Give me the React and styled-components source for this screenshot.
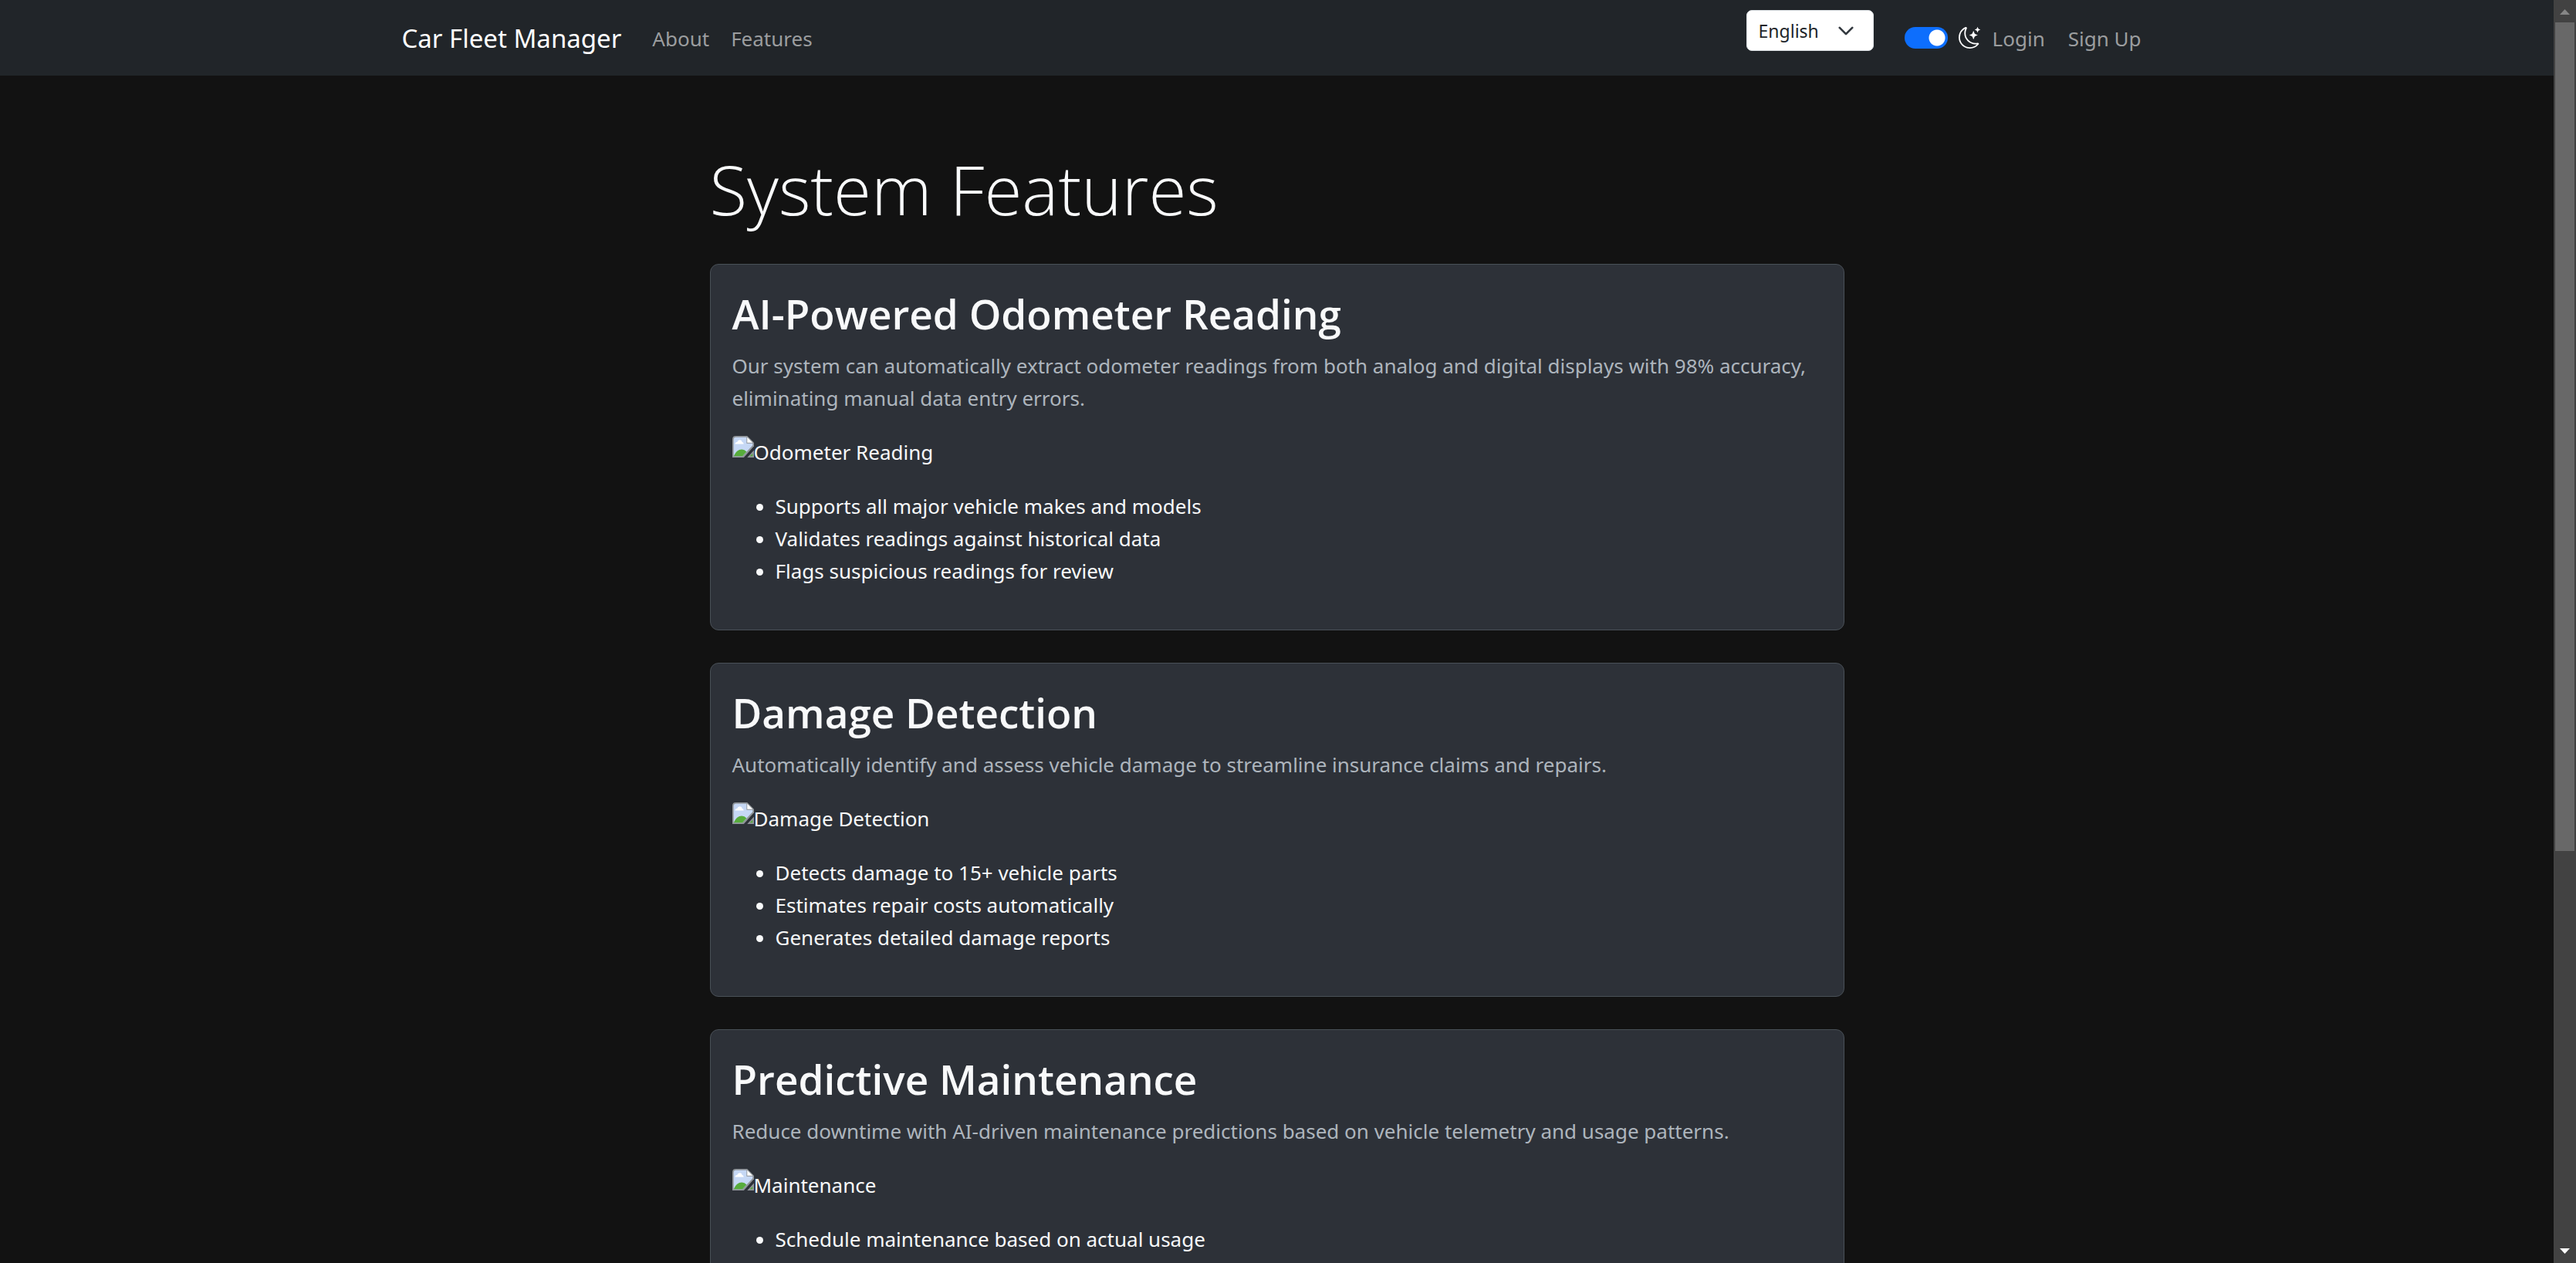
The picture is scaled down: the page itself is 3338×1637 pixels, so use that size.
import React from "react";
import styled, { createGlobalStyle } from "styled-components";
import { BsMoonStars } from "react-icons/bs";

const GlobalStyle = createGlobalStyle`
  *, *::before, *::after { box-sizing: border-box; }
  body {
    margin: 0;
    background: #121212;
    color: #f8f9fa;
    font-family: "Noto Sans", "Open Sans", sans-serif;
    font-size: 26px;
    line-height: 42px;
  }
  h1, h2, p, ul { margin: 0; }
`;

const Shell = styled.div`
  display: flex;
  height: 100vh;
  overflow: hidden;
`;

const Page = styled.div`
  flex: 1;
  min-width: 0;
  overflow: hidden;
`;

const Navbar = styled.header`
  background: #212529;
  padding: 14px 0;
`;

const NavInner = styled.div`
  display: flex;
  align-items: center;
  height: 70px;
  max-width: 2310px;
  margin: 0 auto;
  padding: 0 21px;
`;

const Brand = styled.a`
  margin-right: 26px;
  padding-top: 2px;
  color: #ffffff;
  font-size: 33px;
  text-decoration: none;
  white-space: nowrap;
`;

const NavLinks = styled.nav`
  display: flex;
`;

const NavLink = styled.a`
  padding: 16px 14px 14px;
  color: #9b9d9f;
  text-decoration: none;
  white-space: nowrap;
`;

const NavTools = styled.div`
  display: flex;
  align-items: center;
  gap: 2px;
  margin-left: auto;
`;

const LanguageField = styled.label`
  display: grid;
  align-self: flex-start;
  width: 165px;
  margin-right: 38px;

  > * { grid-area: 1 / 1; }
`;

const LanguageSelect = styled.select`
  appearance: none;
  width: 100%;
  height: 53px;
  padding: 0 15px;
  border: 1px solid #dee2e6;
  border-radius: 7px;
  background: #ffffff;
  color: #212529;
  font-family: inherit;
  font-size: 23px;
`;

const Chevron = styled.svg`
  justify-self: end;
  align-self: center;
  width: 22px;
  height: 22px;
  margin-right: 25px;
  pointer-events: none;
`;

const ThemeToggle = styled.label`
  display: flex;
  align-items: center;
  gap: 14px;
  color: #ffffff;
`;

const Switch = styled.input`
  appearance: none;
  width: 56px;
  height: 28px;
  margin: 0;
  border-radius: 14px;
  background: radial-gradient(circle at 42px 14px, #ffffff 10px, #0d6efd 11px);
`;

const Main = styled.main`
  display: flex;
  flex-direction: column;
  gap: 42px;
  max-width: 1470px;
  margin: 0 auto;
  padding: 92px 0 84px;
`;

const Title = styled.h1`
  font-family: "Open Sans", "Noto Sans", sans-serif;
  font-size: 89px;
  font-weight: 300;
  line-height: 110px;
`;

const Card = styled.section`
  padding: 29px 28px 27px;
  border: 1px solid #495057;
  border-radius: 11px;
  background: #2d3138;
`;

const CardTitle = styled.h2`
  margin-bottom: 12px;
  font-family: "Open Sans", "Noto Sans", sans-serif;
  font-size: 53px;
  font-weight: 600;
  line-height: 69px;
`;

const Summary = styled.p`
  margin-bottom: 28px;
  color: #adb5bd;
`;

const Figure = styled.div`
  display: flex;
  align-items: flex-start;
  margin-bottom: 28px;
`;

const MissingIcon = styled.svg`
  flex: none;
  width: 28px;
  height: 28px;
`;

const Points = styled.ul`
  padding: 0 0 28px 56px;
`;

const Scrollbar = styled.div`
  display: flex;
  flex-direction: column;
  flex: none;
  width: 29px;
  background: #424242;
`;

const Arrow = styled.svg`
  display: block;
  flex: none;
  width: 29px;
  height: 29px;
`;

const Track = styled.div`
  flex: 1;
  padding: 0 2px;
`;

const Thumb = styled.div`
  height: 68%;
  background: #686868;
`;

const features = [
  {
    title: "AI-Powered Odometer Reading",
    summary:
      "Our system can automatically extract odometer readings from both analog and digital displays with 98% accuracy, eliminating manual data entry errors.",
    alt: "Odometer Reading",
    points: [
      "Supports all major vehicle makes and models",
      "Validates readings against historical data",
      "Flags suspicious readings for review",
    ],
  },
  {
    title: "Damage Detection",
    summary:
      "Automatically identify and assess vehicle damage to streamline insurance claims and repairs.",
    alt: "Damage Detection",
    points: [
      "Detects damage to 15+ vehicle parts",
      "Estimates repair costs automatically",
      "Generates detailed damage reports",
    ],
  },
  {
    title: "Predictive Maintenance",
    summary:
      "Reduce downtime with AI-driven maintenance predictions based on vehicle telemetry and usage patterns.",
    alt: "Maintenance",
    points: ["Schedule maintenance based on actual usage"],
  },
];

function MissingImage() {
  return (
    <MissingIcon viewBox="0 0 16 16" aria-hidden="true">
      <path d="M0 2.5Q0 0 2.5 0H11L16 5V7.500L8.500 16H0Z" fill="#8f9499" />
      <path d="M1 2.5Q1 1 2.5 1H10.5V5.5H15V7L7.500 15H1Z" fill="#c6d8f5" />
      <path d="M11 1L15 5H11Z" fill="#ffffff" />
      <path d="M2 6Q2 4.5 3.5 4.5Q4 3 5.5 3Q7 3 7.2 4.5Q8.4 4.7 8.4 6Z" fill="#ffffff" />
      <path d="M1 15Q3 10 7 10Q9 10 10.500 11.700L7.500 15H1Z" fill="#57ac3c" />
      <path d="M16 10.500V16H11Z" fill="#8f9499" />
      <path d="M15 13V15H13Z" fill="#57ac3c" />
    </MissingIcon>
  );
}

function FeatureCard({ title, summary, alt, points }) {
  return (
    <Card>
      <CardTitle>{title}</CardTitle>
      <Summary>{summary}</Summary>
      <Figure>
        <MissingImage />
        <span>{alt}</span>
      </Figure>
      <Points>
        {points.map((point) => (
          <li key={point}>{point}</li>
        ))}
      </Points>
    </Card>
  );
}

export default function App() {
  return (
    <>
      <GlobalStyle />
      <Shell>
        <Page>
          <Navbar>
            <NavInner>
              <Brand href="#home">Car Fleet Manager</Brand>
              <NavLinks>
                <NavLink href="#about">About</NavLink>
                <NavLink href="#features">Features</NavLink>
              </NavLinks>
              <NavTools>
                <LanguageField>
                  <LanguageSelect aria-label="Language" defaultValue="en">
                    <option value="en">English</option>
                  </LanguageSelect>
                  <Chevron viewBox="0 0 16 16" aria-hidden="true">
                    <path d="m2 5 6 6 6-6" fill="none" stroke="#343a40" strokeWidth="2" strokeLinecap="round" strokeLinejoin="round" />
                  </Chevron>
                </LanguageField>
                <ThemeToggle>
                  <Switch type="checkbox" role="switch" aria-label="Dark mode" defaultChecked />
                  <BsMoonStars size={28} aria-hidden="true" />
                </ThemeToggle>
                <NavLink href="#login">Login</NavLink>
                <NavLink href="#signup">Sign Up</NavLink>
              </NavTools>
            </NavInner>
          </Navbar>
          <Main>
            <Title>System Features</Title>
            {features.map((feature) => (
              <FeatureCard key={feature.title} {...feature} />
            ))}
          </Main>
        </Page>
        <Scrollbar aria-hidden="true">
          <Arrow viewBox="0 0 29 29">
            <path d="M8 19 14.500 12 21 19Z" fill="#868686" />
          </Arrow>
          <Track>
            <Thumb />
          </Track>
          <Arrow viewBox="0 0 29 29">
            <path d="M8 10 14.500 17 21 10Z" fill="#ffffff" />
          </Arrow>
        </Scrollbar>
      </Shell>
    </>
  );
}
